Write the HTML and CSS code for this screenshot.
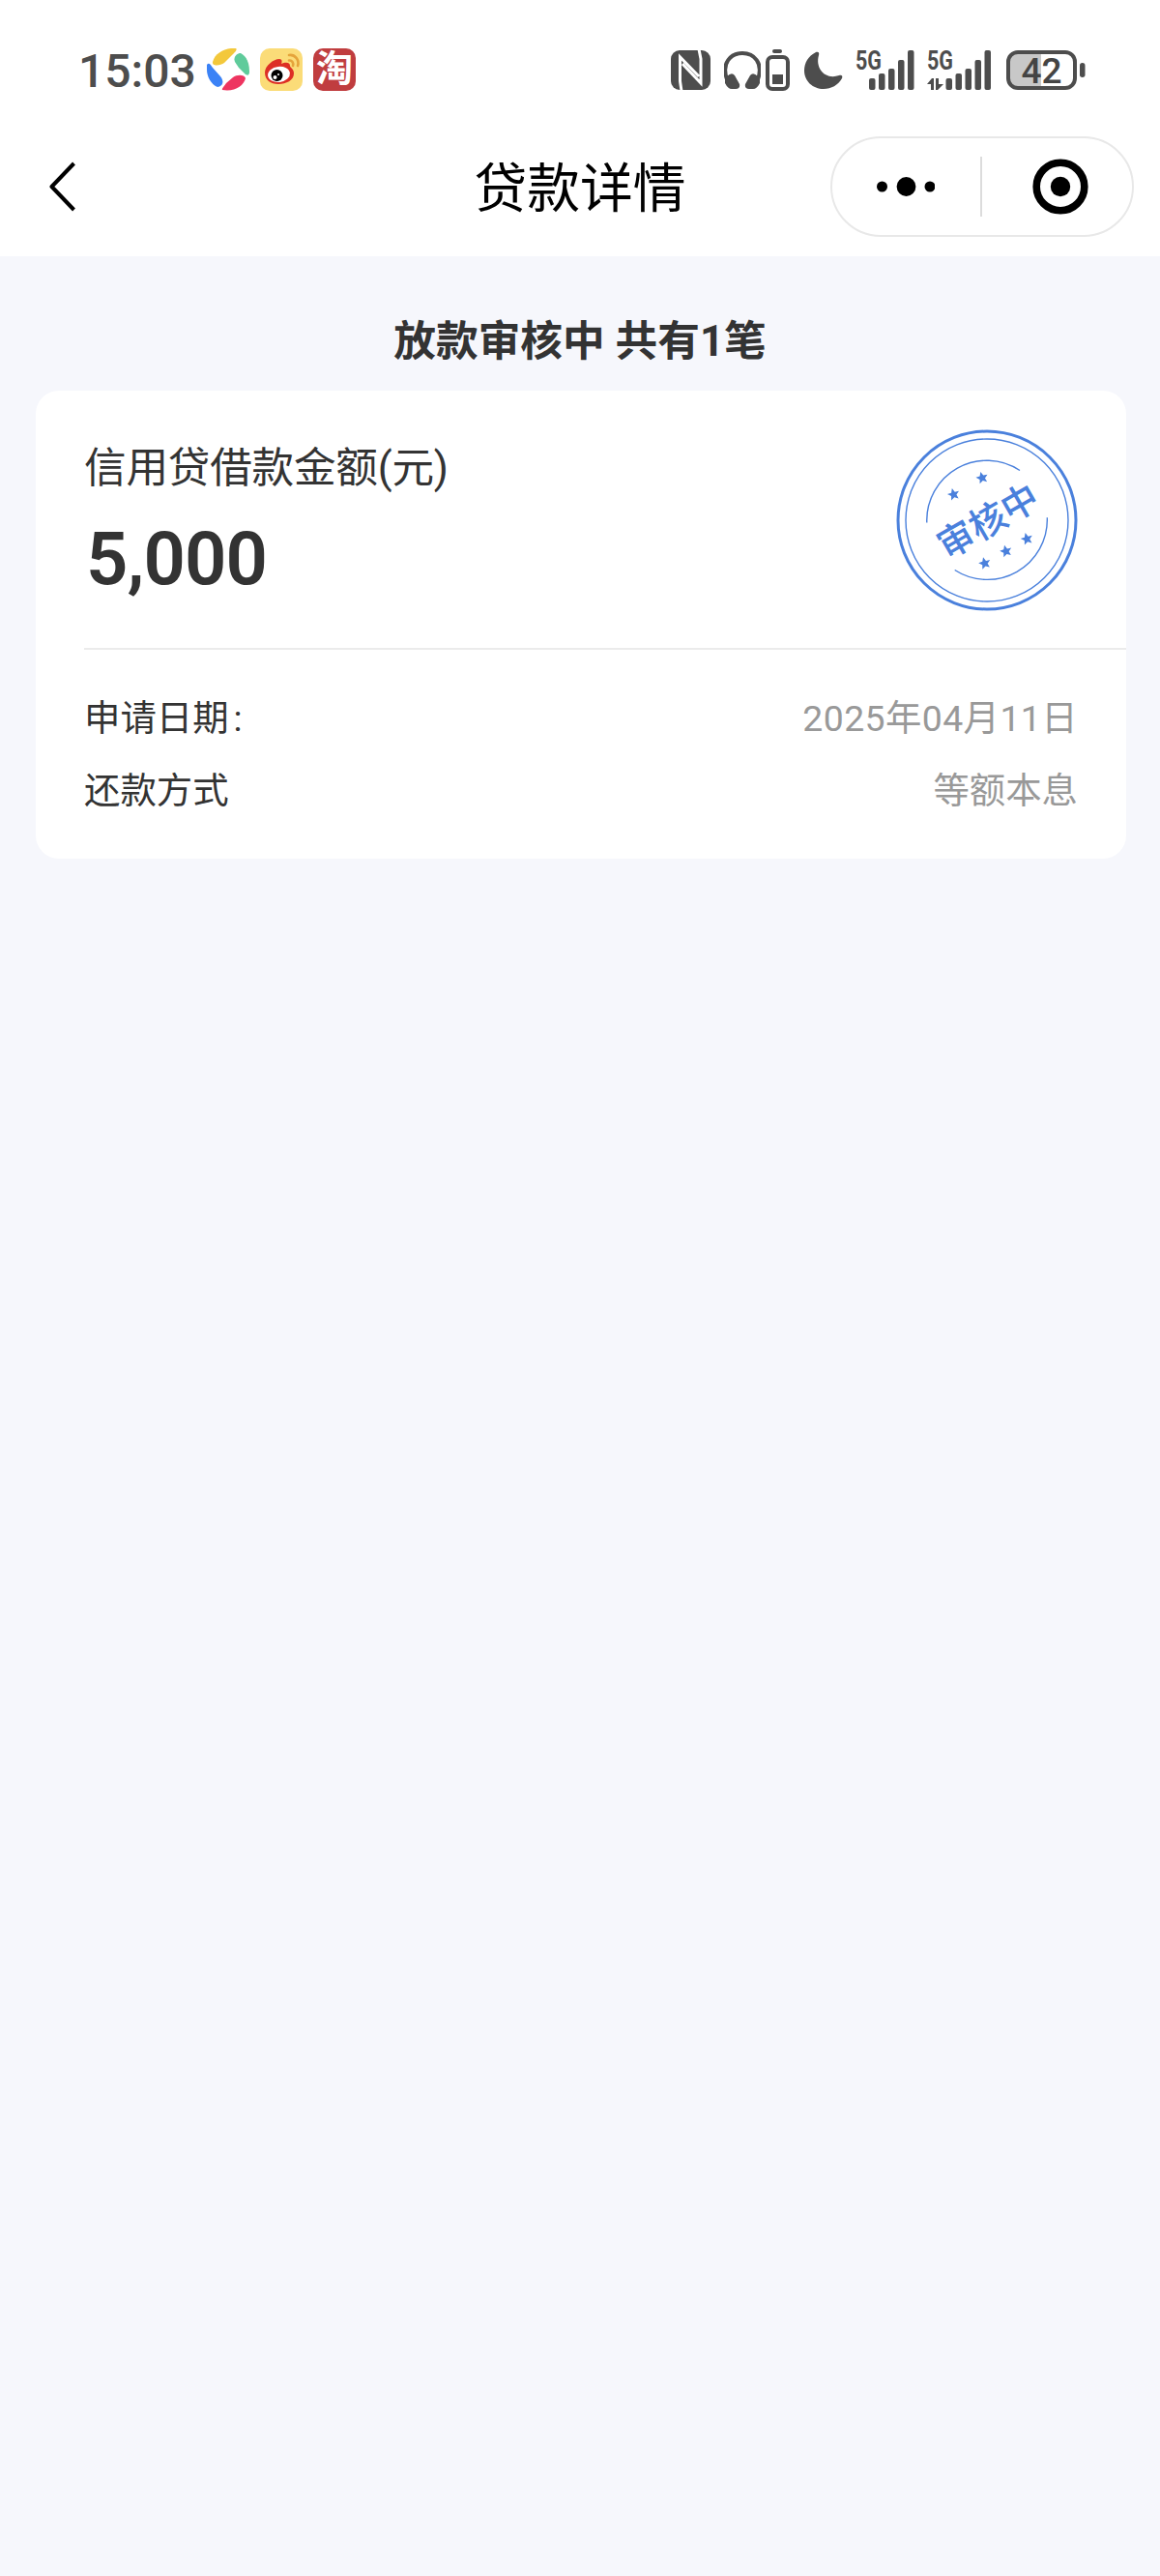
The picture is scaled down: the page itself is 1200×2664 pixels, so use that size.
FILE: index.html
```html
<!DOCTYPE html>
<html lang="zh-CN">
<head>
  <meta charset="utf-8">
  <title>贷款详情</title>
  <link rel="stylesheet" href="styles.css">
</head>
<body>

<div class="status">
  <span class="time">15:03</span>
  <div class="apps">
    <svg width="44" height="44" viewBox="0 0 44 44">
      <path fill="#f3c83c" d="M6 14C8 6 16 1 25 0L30 0C32 1 29 4 27 6L18 15C14 18 5 19 6 14Z"/>
      <path fill="#5fcb9b" d="M29 14C27 9 31 5 35 5C41 8 44 15 44 24C44 29 41 28 39 26L33 20Z"/>
      <path fill="#3b82f6" d="M0 17C2 14 4 17 6 20L14 29C18 34 17 39 11 40C4 37 0 29 0 22Z"/>
      <path fill="#ee3560" d="M16 43C15 42 18 39 20 36L27 30C31 27 39 27 40 31C38 39 29 45 16 43Z"/>
    </svg>
    <svg width="44" height="44" viewBox="0 0 44 44">
      <rect width="44" height="44" rx="10" fill="#fbdc78"/>
      <path fill="none" stroke="#e5a43b" stroke-width="2.600" stroke-linecap="round" d="M30 7C36 6 41 12 39 18M30 12.500C33 12 35 15 34 18"/>
      <path fill="#dd2f25" d="M5 25C5 18 14 11 20 11C23 11 23 14 22 16C26 14 31 14 31 18C31 20 35 21 35 26C35 33 27 37 19 37C11 37 5 33 5 25Z"/>
      <ellipse cx="19.500" cy="27" rx="11.500" ry="8" fill="#fff" transform="rotate(-7 19 27)"/>
      <circle cx="17.500" cy="28" r="6" fill="#000"/>
      <circle cx="15.500" cy="30" r="2" fill="#fff"/>
      <circle cx="19" cy="27" r="1" fill="#fff"/>
    </svg>
    <span class="tao">淘</span>
  </div>

  <div class="signals">
    <svg class="nfc" width="41" height="41" viewBox="0 0 41 41">
      <rect width="41" height="41" rx="9" fill="#4d4d4d"/>
      <path fill="none" stroke="#fff" stroke-width="3" d="M11 42L9.500 32V7L29 27M12 14L31 34V9L29 -1"/>
    </svg>
    <svg class="headset" width="38" height="41" viewBox="0 0 38 41">
      <path fill="none" stroke="#4d4d4d" stroke-width="4" d="M3 30C-3 13 7 3 19 3S41 13 35 30"/>
      <path fill="#4d4d4d" d="M3 27Q8 22 11 26L16 35Q17 40 12 40H8Q4 40 1 34V30ZM35 27Q30 22 27 26L22 35Q21 40 26 40H30Q34 40 37 34V30Z"/>
    </svg>
    <svg class="cell" width="25" height="43" viewBox="0 0 25 43">
      <rect x="7" y="0" width="10" height="4" rx="2" fill="#4d4d4d"/>
      <rect x="2" y="8" width="21" height="33" rx="5" fill="none" stroke="#4d4d4d" stroke-width="4"/>
      <rect x="7" y="26" width="11" height="10" fill="#4d4d4d"/>
    </svg>
    <svg class="moon" width="40" height="40" viewBox="0 0 40 40">
      <path fill="#4d4d4d" d="M12 1C14 0 16 1 15 4C11 18 22 30 36 25C39 24 40 26 39 28C35 35 28 39 20 39C9 39 0 31 0 20C0 12 4 5 12 1Z"/>
    </svg>
    <svg class="sim" width="62" height="50" viewBox="0 -8 62 50">
      <text class="net" x="0" y="20" textLength="27" lengthAdjust="spacingAndGlyphs">5G</text>
      <g fill="#4d4d4d">
        <rect x="14" y="29" width="6.500" height="12" rx="2"/>
        <rect x="24" y="24" width="6.500" height="17" rx="2"/>
        <rect x="34" y="19" width="6.500" height="22" rx="2"/>
        <rect x="44" y="10" width="6.500" height="31" rx="2"/>
        <rect x="54" y="0" width="6.500" height="41" rx="2"/>
      </g>
    </svg>
    <svg class="sim2" width="68" height="50" viewBox="0 -8 68 50">
      <text class="net" x="1" y="20" textLength="27" lengthAdjust="spacingAndGlyphs">5G</text>
      <g fill="#4d4d4d">
        <path d="M1 35L6 29H8V41H5V35ZM10 29H13V35H18L12 41H10Z"/>
        <rect x="20.500" y="29" width="6.500" height="12" rx="2"/>
        <rect x="30.500" y="24" width="6.500" height="17" rx="2"/>
        <rect x="40.500" y="19" width="6.500" height="22" rx="2"/>
        <rect x="50.500" y="10" width="6.500" height="31" rx="2"/>
        <rect x="60.500" y="0" width="6.500" height="41" rx="2"/>
      </g>
    </svg>
    <svg class="battery" width="82" height="42" viewBox="0 0 82 42">
      <path fill="#c8c8c8" d="M12 2H36V39H12Q2 39 2 29V12Q2 2 12 2Z"/>
      <rect x="2" y="2" width="69" height="37" rx="10" fill="none" stroke="#4d4d4d" stroke-width="4"/>
      <rect x="76" y="13" width="5.500" height="15" rx="2.700" fill="#4d4d4d"/>
      <text class="level" x="15.500" y="33.500" textLength="42">42</text>
    </svg>
  </div>
</div>

<div class="nav">
  <svg class="back" width="28" height="54" viewBox="0 0 28 54">
    <path fill="none" stroke="#000" stroke-width="4" stroke-linejoin="round" d="M25.500 3L2.500 27L25.500 51"/>
  </svg>
  <h1>贷款详情</h1>
  <div class="capsule">
    <svg width="60" height="22" viewBox="0 0 60 22">
      <circle cx="5.500" cy="11" r="5.500"/>
      <circle cx="30.500" cy="11" r="9.900"/>
      <circle cx="55" cy="11" r="5.500"/>
    </svg>
    <i></i>
    <svg width="58" height="58" viewBox="0 0 58 58">
      <circle cx="29" cy="29" r="24.800" fill="none" stroke="#000" stroke-width="7.600"/>
      <circle cx="29" cy="29" r="10.200"/>
    </svg>
  </div>
</div>

<h2>放款审核中 共有1笔</h2>

<div class="card">
  <div class="top">
    <div>
      <div class="label">信用贷借款金额(元)</div>
      <div class="amount">5,000</div>
    </div>
    <svg class="stamp" width="188" height="188" viewBox="0 0 188 188">
      <defs>
        <path id="star" d="M0 -6.500L1.900 -2.200L6.200 -2L2.800 1L3.900 5.300L0 3L-3.900 5.300L-2.800 1L-6.200 -2L-1.900 -2.200Z"/>
      </defs>
      <g fill="none" stroke="#4a80dc">
        <circle cx="94" cy="94" r="92" stroke-width="3"/>
        <circle cx="94" cy="94" r="84" stroke-width="1.400"/>
        <path stroke-width="1.400" d="M31.800 96.500A62 62 0 0 1 128 42.500M60.700 145.500A62 62 0 0 0 156.300 91.200"/>
      </g>
      <g fill="#4a80dc">
        <use href="#star" transform="translate(59.500 67.300) rotate(-15)"/>
        <use href="#star" transform="translate(89 50.200) rotate(-15)"/>
        <use href="#star" transform="translate(91.700 138.500) rotate(-15)"/>
        <use href="#star" transform="translate(113.700 126) rotate(-15)"/>
        <use href="#star" transform="translate(135.300 113.300) rotate(-15)"/>
      </g>
      <text x="94.500" y="109" text-anchor="middle" transform="rotate(-30 94 94)">审核中</text>
    </svg>
  </div>
  <div class="rows">
    <div class="row"><span>申请日期<span class="colon">:</span></span><span class="val date">2025年04月11日</span></div>
    <div class="row"><span>还款方式</span><span class="val">等额本息</span></div>
  </div>
</div>

</body>
</html>
```
FILE: styles.css
```css
body {
  margin: 0;
  min-height: 2664px;
  background-color: #f6f7fc;
  color: #333;
  font-family: Roboto, "Noto Sans CJK SC", sans-serif;
}
h1,
h2 {
  margin: 0;
}
svg {
  display: block;
  flex: none;
}
.status {
  display: flex;
  align-items: flex-start;
  height: 79px;
  padding: 50px 77px 0 81px;
  background-color: #fff;
}
.time {
  width: 133px;
  font-size: 48px;
  line-height: 47px;
  font-weight: 500;
  color: #4d4d4d;
}
.apps {
  display: flex;
  gap: 11px;
}
.tao {
  width: 44px;
  height: 44px;
  border-radius: 10px;
  background-color: #c03d3f;
  color: #fff;
  font-size: 38px;
  line-height: 43px;
  font-weight: 700;
  text-align: center;
}
.signals {
  display: flex;
  align-items: flex-start;
  margin-left: auto;
  padding-top: 2px;
}
.headset {
  margin-left: 14px;
}
.cell {
  margin: -1px 0 0 5px;
}
.moon {
  margin: 1px 0 0 15px;
}
.sim {
  margin: -8px 0 0 13px;
}
.sim2 {
  margin: -8px 0 0 11px;
}
.battery {
  margin-left: 15px;
}
.net {
  font-size: 27px;
  font-weight: 700;
  fill: #4d4d4d;
}
.level {
  font-size: 37px;
  font-weight: 500;
  fill: #444;
}
.nav {
  display: grid;
  grid-template-columns: 1fr auto 1fr;
  align-items: center;
  height: 128px;
  padding: 0 27px 8px 51px;
  background-color: #fff;
}
.nav h1 {
  padding: 4px 24px 0 0;
  font-size: 54.800px;
  line-height: 80px;
  font-weight: 400;
  color: #000;
}
.capsule {
  display: flex;
  justify-self: end;
  align-items: center;
  box-sizing: border-box;
  width: 314px;
  height: 104px;
  padding: 0 45px 0 46px;
  border: 2px solid #e8e8e8;
  border-radius: 52px;
}
.capsule i {
  width: 2px;
  height: 62px;
  margin: 0 auto 0 47px;
  background-color: #dcdcdc;
}
h2 {
  padding-top: 56px;
  font-size: 43.700px;
  line-height: 64px;
  text-align: center;
}
.card {
  margin: 19px 35px 0 37px;
  height: 484px;
  border-radius: 24px;
  background-color: #fff;
}
.top {
  display: flex;
  justify-content: space-between;
  margin-left: 50px;
  height: 266px;
  padding-right: 50px;
  border-bottom: 2px solid #ebebeb;
}
.label {
  margin-top: 49px;
  font-size: 43.600px;
  line-height: 64px;
  letter-spacing: -0.200px;
}
.amount {
  margin-top: 16px;
  padding-left: 2px;
  font-size: 76px;
  line-height: 90px;
  font-weight: 600;
  letter-spacing: -0.900px;
}
.stamp {
  margin-top: 40px;
}
.stamp text {
  font-size: 38px;
  font-weight: 500;
  fill: #4a80dc;
}
.rows {
  padding: 34px 50px 0;
}
.row {
  display: flex;
  justify-content: space-between;
  font-size: 37.400px;
  line-height: 75px;
}
.colon {
  margin-left: 5px;
}
.val {
  color: #999;
}
.date {
  letter-spacing: 0.400px;
}
```
